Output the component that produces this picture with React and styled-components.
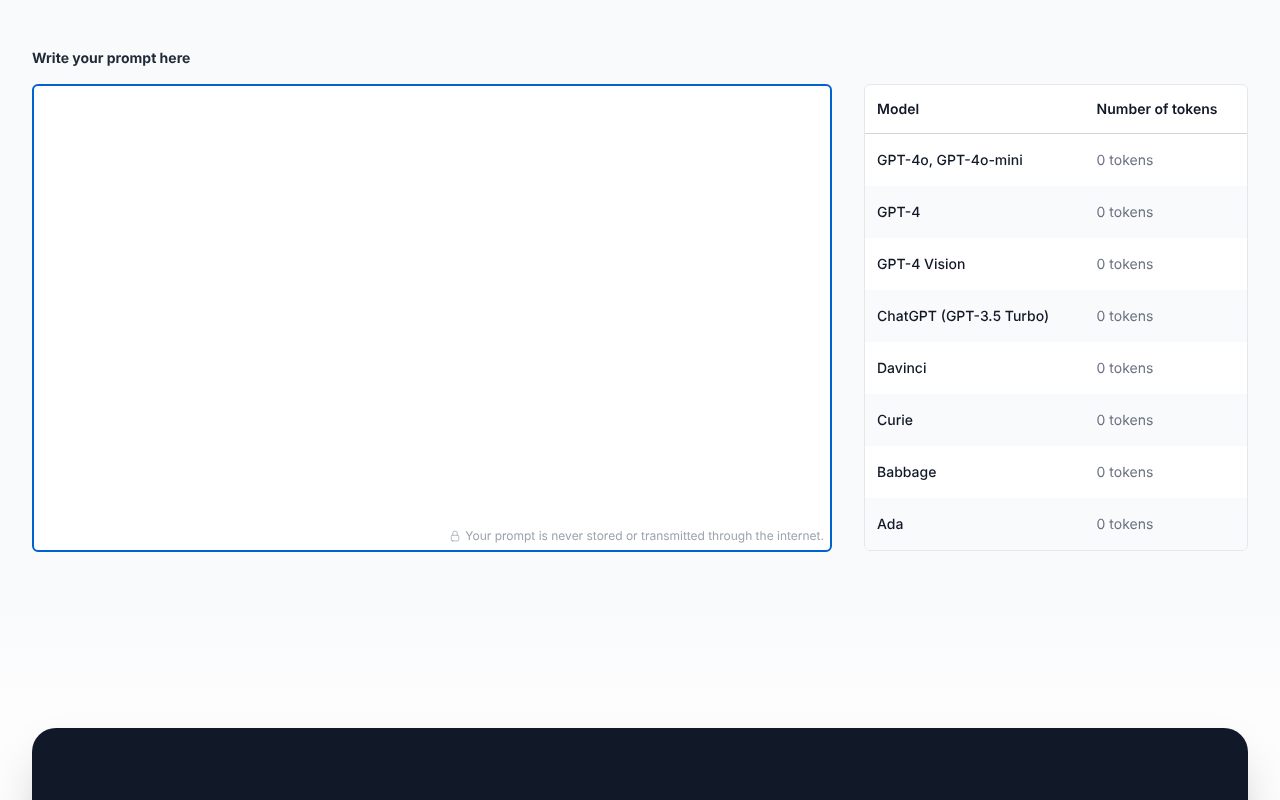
import React from "react";
import styled, { createGlobalStyle } from "styled-components";
import { HiOutlineLockClosed } from "react-icons/hi2";

const models = [
  "GPT-4o, GPT-4o-mini",
  "GPT-4",
  "GPT-4 Vision",
  "ChatGPT (GPT-3.5 Turbo)",
  "Davinci",
  "Curie",
  "Babbage",
  "Ada",
];

const GlobalStyle = createGlobalStyle`
  html, body {
    margin: 0;
    padding: 0;
    height: 100%;
    background: #f9fafb;
    font-family: Inter, "Liberation Sans", sans-serif;
    text-rendering: geometricPrecision;
    overflow: hidden;
  }
`;

const App = () => {
  return (
    <Page>
      <GlobalStyle />
      <Main>
        <PromptColumn>
          <Label htmlFor="prompt">Write your prompt here</Label>
          <PromptBox>
            <PromptInput id="prompt" />
            <Privacy>
              <HiOutlineLockClosed size={12} />
              Your prompt is never stored or transmitted through the internet.
            </Privacy>
          </PromptBox>
        </PromptColumn>
        <TableCard>
          <Table>
            <thead>
              <tr>
                <HeadCell>Model</HeadCell>
                <HeadCell>Number of tokens</HeadCell>
              </tr>
            </thead>
            <tbody>
              {models.map((name) => (
                <Row key={name}>
                  <NameCell>{name}</NameCell>
                  <CountCell>0 tokens</CountCell>
                </Row>
              ))}
            </tbody>
          </Table>
        </TableCard>
      </Main>
      <Footer />
    </Page>
  );
};

export default App;

const Page = styled.div`
  height: 800px;
  overflow: hidden;
  background: linear-gradient(180deg, #f9fafb 0px, #f9fafb 590px, #fdfdfe 728px);
`;

const Main = styled.main`
  display: grid;
  grid-template-columns: 800px 384px;
  column-gap: 32px;
  align-items: start;
  padding: 48px 32px 0;
  will-change: transform;
`;

const PromptColumn = styled.div`
  display: flex;
  flex-direction: column;
`;

const Label = styled.label`
  height: 20px;
  margin-bottom: 16px;
  font-size: 14px;
  font-weight: 700;
  line-height: 22px;
  color: #1f2937;
`;

const PromptBox = styled.div`
  position: relative;
  box-sizing: border-box;
  height: 468px;
  background: #ffffff;
  border: 2px solid #0062cc;
  border-radius: 6px;
`;

const PromptInput = styled.textarea`
  display: block;
  box-sizing: border-box;
  width: 100%;
  height: 100%;
  padding: 8px 12px;
  border: 0;
  outline: 0;
  resize: none;
  background: transparent;
  font-family: inherit;
  font-size: 14px;
`;

const Privacy = styled.div`
  position: absolute;
  right: 6px;
  bottom: 6px;
  display: flex;
  align-items: center;
  gap: 4px;
  font-size: 12px;
  line-height: 16px;
  color: #9ca3af;
`;

const TableCard = styled.div`
  margin-top: 36px;
  overflow: hidden;
  background: #ffffff;
  border: 1px solid #e5e7eb;
  border-radius: 6px;
`;

const Table = styled.table`
  width: 100%;
  table-layout: fixed;
  border-collapse: separate;
  border-spacing: 0;
  font-size: 14px;
  line-height: 20px;
`;

const HeadCell = styled.th`
  height: 49px;
  padding: 2px 12px 0;
  box-sizing: border-box;
  border-bottom: 1px solid #d1d5db;
  text-align: left;
  font-weight: 600;
  color: #111827;

  &:first-child {
    width: 219.6px;
  }
`;

const Row = styled.tr`
  &:nth-child(even) {
    background: #f9fafb;
  }
`;

const NameCell = styled.td`
  height: 52px;
  padding: 2px 12px 0;
  box-sizing: border-box;
  font-weight: 500;
  color: #111827;
`;

const CountCell = styled.td`
  height: 52px;
  padding: 2px 12px 0;
  box-sizing: border-box;
  color: #6b7280;
`;

const Footer = styled.footer`
  height: 200px;
  margin: 176px 32px 0;
  background: #111827;
  border-radius: 24px;
  box-shadow: 0 25px 50px -12px rgba(0, 0, 0, 0.25);
`;
